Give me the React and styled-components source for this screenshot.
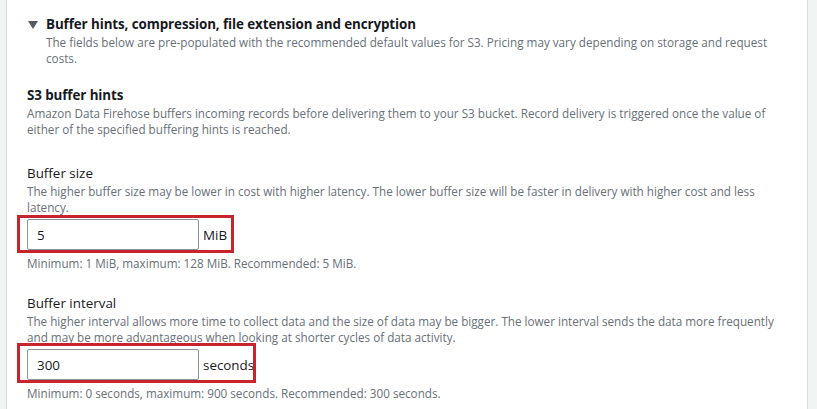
import React from "react";
import styled, { createGlobalStyle } from "styled-components";

const Global = createGlobalStyle`
  html, body { margin: 0; padding: 0; background: #f2f3f3; }
  body { font-family: "Open Sans", "Noto Sans", sans-serif; color: #16191f; }
  * { box-sizing: border-box; }
`;

const Panel = styled.div`
  margin: 0 9px 0 6px;
  min-height: 409px;
  background: #fff;
  border-left: 1px solid #d5dbdb;
  border-right: 1px solid #d5dbdb;
  padding: 14px 28px 0 20px;
`;

const ExpandHeader = styled.div`
  display: flex;
  align-items: flex-start;
  gap: 8px;
  padding-left: 1px;
`;

const Caret = styled.svg`
  flex: none;
  width: 10px;
  height: 10px;
  margin-top: 6px;
`;

const HeaderText = styled.div`
  display: flex;
  flex-direction: column;
`;

const Title = styled.div`
  font-size: 13.4px;
  line-height: 20px;
  font-weight: 700;
  letter-spacing: -0.1px;
  color: #16191f;
`;

const Desc = styled.div`
  font-size: 11.7px;
  line-height: 16px;
  color: #687078;
`;

const Section = styled.div`
  margin-top: 19px;
`;

const Field = styled.div`
  margin-top: ${(p) => p.$top}px;
`;

const Label = styled.div`
  font-size: 13.4px;
  line-height: 20px;
  color: #16191f;
`;

const InputRow = styled.div`
  position: relative;
  display: inline-flex;
  align-items: center;
  margin-top: 4px;
  &::after {
    content: "";
    position: absolute;
    top: ${(p) => -p.$ext[0]}px;
    right: ${(p) => -p.$ext[1]}px;
    bottom: -3px;
    left: -10px;
    border: 3px solid #c8242d;
    pointer-events: none;
  }
`;

const Input = styled.input`
  width: 172px;
  height: 31px;
  border: 1px solid #879596;
  border-radius: 2px;
  padding: 0 9px;
  font-family: inherit;
  font-size: 13.4px;
  color: #16191f;
  background: #fff;
  outline: none;
`;

const Unit = styled.span`
  margin-left: 4px;
  font-size: 13.4px;
  line-height: 20px;
  color: #16191f;
`;

const Hint = styled.div`
  margin-top: 5px;
  font-size: 11.7px;
  line-height: 16px;
  color: #687078;
`;

export default function App() {
  return (
    <>
      <Global />
      <Panel>
        <ExpandHeader>
          <Caret viewBox="0 0 10 10">
            <polygon points="0,1 10,1 5,9" fill="#545b64" />
          </Caret>
          <HeaderText>
            <Title>Buffer hints, compression, file extension and encryption</Title>
            <Desc>
              The fields below are pre-populated with the recommended default values for S3. Pricing may vary depending on storage and request
              costs.
            </Desc>
          </HeaderText>
        </ExpandHeader>

        <Section>
          <Title>S3 buffer hints</Title>
          <Desc>
            Amazon Data Firehose buffers incoming records before delivering them to your S3 bucket. Record delivery is triggered once the value of
            either of the specified buffering hints is reached.
          </Desc>
        </Section>

        <Field $top={26}>
          <Label>Buffer size</Label>
          <Desc>
            The higher buffer size may be lower in cost with higher latency. The lower buffer size will be faster in delivery with higher cost and less
            latency.
          </Desc>
          <InputRow $ext={[4, 7]}>
            <Input defaultValue="5" />
            <Unit>MiB</Unit>
          </InputRow>
          <Hint>Minimum: 1 MiB, maximum: 128 MiB. Recommended: 5 MiB.</Hint>
        </Field>

        <Field $top={22}>
          <Label>Buffer interval</Label>
          <Desc>
            The higher interval allows more time to collect data and the size of data may be bigger. The lower interval sends the data more frequently
            and may be more advantageous when looking at shorter cycles of data activity.
          </Desc>
          <InputRow $ext={[6, 2]}>
            <Input defaultValue="300" />
            <Unit>seconds</Unit>
          </InputRow>
          <Hint>Minimum: 0 seconds, maximum: 900 seconds. Recommended: 300 seconds.</Hint>
        </Field>
      </Panel>
    </>
  );
}
